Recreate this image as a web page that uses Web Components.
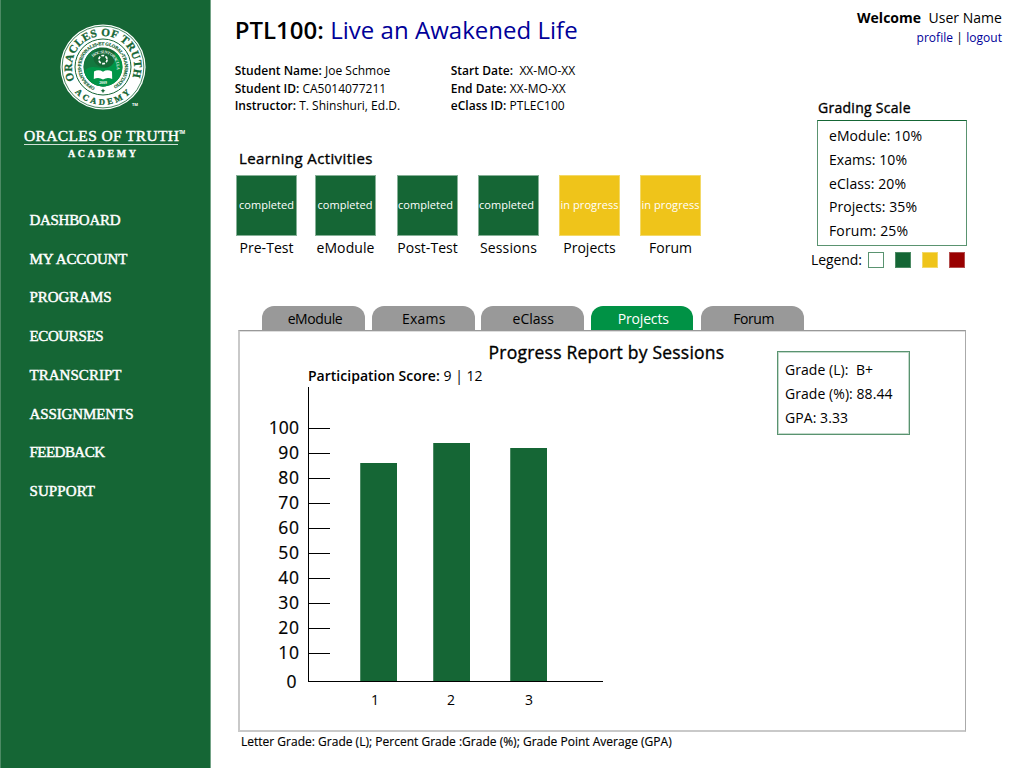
<!DOCTYPE html>
<html lang="en">
<head>
<meta charset="utf-8">
<title>Oracles of Truth Academy</title>
<style>
html,body{margin:0;height:100%;background:#fff}
body{font-family:"Open Sans","Noto Sans",sans-serif;color:#000;overflow:hidden}
</style>
</head>
<body>
<course-page></course-page>
<script>
const attach=(el,html)=>{el.attachShadow({mode:'open'}).innerHTML=html;};

/* One line of type, tracked so that it spans the width given in "w". */
class TextLine extends HTMLElement{
  constructor(){
    super();
    attach(this,`<style>
      :host{display:block;width:max-content;white-space:pre}
      :host([medium]){-webkit-text-stroke:.35px currentColor}
      ::slotted(b){font-weight:600}
      ::slotted(strong){font-weight:700}
      ::slotted(a){color:#000099;font-weight:inherit}
    </style><slot></slot>`);
  }
  connectedCallback(){
    const a=n=>this.getAttribute(n),s=this.style;
    if(a('size'))s.fontSize=a('size')+'px';
    if(a('lh'))s.lineHeight=a('lh')+'px';
    if(a('weight'))s.fontWeight=a('weight');
    if(a('w')){
      const n=this.textContent.length,d=+a('w')+1-this.getBoundingClientRect().width;
      const t=n>1?d/(n-1):0;
      s.letterSpacing=t+'px';s.marginRight=-t+'px';
    }
  }
}
customElements.define('text-line',TextLine);

class AcademySeal extends HTMLElement{
  constructor(){
    super();
    attach(this,`<style>:host{display:block;width:90px;height:90px}svg{display:block;overflow:visible}
      text{font-family:"Liberation Serif",serif;font-weight:700;fill:#156635}
      .o{stroke:#156635;stroke-width:.3px}</style>
    <svg width="90" height="90" viewBox="-45 -45 90 90">
      <defs>
        <path id="top" d="M-28.2 13.1A31.1 31.1 0 1 1 28.2 13.1"/>
        <path id="bot" d="M-33.5 17.5A37.8 37.8 0 0 0 33.5 17.5"/>
        <path id="ring" d="M-8 20.4A21.9 21.9 0 1 1 8 20.4"/>
        <path id="hoc" d="M-9.8 -9.8A13.9 13.9 0 0 1 13.4 3.5"/>
      </defs>
      <circle r="42.6" fill="#fff"/>
      <circle r="40.9" fill="none" stroke="#156635" stroke-width=".8"/>
      <circle r="28" fill="none" stroke="#156635" stroke-width="1"/>
      <text class="o" font-size="11.2"><textPath href="#top" textLength="121" lengthAdjust="spacing">ORACLES OF TRUTH</textPath></text>
      <text class="o" font-size="8.6"><textPath href="#bot" startOffset="9.5" textLength="62" lengthAdjust="spacing">ACADEMY</textPath></text>
      <text font-size="4.6" style="stroke:#156635;stroke-width:.2px"><textPath href="#ring" textLength="118" lengthAdjust="spacing">OPERANTIS•PERSONALIS•ET GLOBAL•TRANSMUTATIO</textPath></text>
      <path d="M0 21.4L.8 23L2.4 23.8L.8 24.6L0 26.2L-.8 24.6L-2.4 23.8L-.8 23Z" fill="#156635"/>
      <circle r="19.4" fill="#156635"/>
      <path d="M0 -19.4A19.4 19.4 0 0 0 0 19.4A9.7 9.7 0 0 0 0 0A9.7 9.7 0 0 1 0 -19.4Z" fill="#13783f"/>
      <path d="M-18.8 4.5C-14 -3 -5 1 0 1C9 1 14 -5 11.5 -15.6A19.4 19.4 0 1 1 -18.8 4.5Z" fill="#009548"/>
      <text font-size="4.2" style="fill:#e5f1e9"><textPath href="#hoc" textLength="35" lengthAdjust="spacing">HOC SUNT ORACULA</textPath></text>
      <circle cy="-7.4" r="4.1" fill="none" stroke="#fff" stroke-width="1.7" stroke-dasharray="2.9 1.39"/>
      <path d="M-9 4.6Q-4.5 2 0 4.8Q4.5 2 9 4.6L9.2 12Q4.5 9.6 0 12.5Q-4.5 9.6 -9.2 12Z" fill="#fff"/>
      <text y="17.2" font-size="3.8" text-anchor="middle" style="fill:#fff">2009</text>
      <text x="29" y="39" font-size="4" style="fill:#fff;font-family:'Open Sans',sans-serif">TM</text>
    </svg>`);
  }
}
customElements.define('academy-seal',AcademySeal);

class SideNav extends HTMLElement{
  constructor(){
    super();
    const items=[['DASHBOARD',90],['MY ACCOUNT',97],['PROGRAMS',81],['ECOURSES',73],['TRANSCRIPT',91],['ASSIGNMENTS',103],['FEEDBACK',74.5],['SUPPORT',64.5]];
    attach(this,`<style>
      :host{display:flex;flex-direction:column;box-sizing:border-box;width:211px;height:768px;background:#156635;color:#fff;
        font-family:"Liberation Serif",serif;padding-top:22px;border-left:1px solid #4c8a64;border-right:1px solid #73a386}
      academy-seal{margin-left:57px}
      .brand{display:flex;margin:15px 0 0 23px;-webkit-text-stroke:.45px #fff}
      .rule{width:154px;height:1px;background:#cfe0d6;margin:-1px 0 0 23px}
      .tm{font-family:"Open Sans",sans-serif;margin-top:2px;-webkit-text-stroke:.2px #fff}
      .sub{margin-left:67px;-webkit-text-stroke:.3px #fff}
      nav{margin:38px 0 0 28.5px;-webkit-text-stroke:.45px #fff}
    </style>
    <academy-seal></academy-seal>
    <div class="brand"><text-line size="15.5" lh="18" w="154">ORACLES OF TRUTH</text-line><text-line class="tm" size="4.5" lh="6" w="5">TM</text-line></div>
    <div class="rule"></div>
    <text-line class="sub" size="10" lh="18" weight="700" w="67">ACADEMY</text-line>
    <nav>${items.map(([t,w])=>`<text-line size="15" lh="38.7" w="${w}">${t}</text-line>`).join('')}</nav>`);
  }
}
customElements.define('side-nav',SideNav);

class ActivityTile extends HTMLElement{
  connectedCallback(){
    if(this.shadowRoot)return;
    const done=this.getAttribute('state')==='completed';
    attach(this,`<style>
      :host{display:flex;flex-direction:column;align-items:center;width:61px}
      .box{box-sizing:border-box;width:61px;height:61px;display:flex;justify-content:center;color:#fff;
        border:1px solid ${done?'#86b097':'#f3d968'};background:${done?'#156635':'#efc41a'};margin-bottom:2px}
      .box text-line{position:relative;left:${this.getAttribute('nudge')||0}px}
    </style>
    <div class="box"><text-line size="11" lh="57" w="${done?54:57}">${this.getAttribute('state')}</text-line></div>
    <text-line size="14" lh="20" w="${this.getAttribute('w')}">${this.getAttribute('name')}</text-line>`);
  }
}
customElements.define('activity-tile',ActivityTile);

class CourseHeader extends HTMLElement{
  constructor(){
    super();
    attach(this,`<style>
      :host{display:block;padding:14px 0 0 23.7px}
      .meta{display:grid;grid-template-columns:216px auto;margin-top:16.1px}
      .h{margin:33.4px 0 7px 4.3px}
      .tiles{display:flex;margin-left:1.3px}
    </style>
    <text-line size="24" lh="32" w="342"><b>PTL100:</b> <a>Live an Awakened Life</a></text-line>
    <div class="meta">
      <text-line size="12" lh="17.5" w="154.5"><b>Student Name:</b> Joe Schmoe</text-line><text-line size="12" lh="17.5" w="123.5"><b>Start Date:</b>  XX-MO-XX</text-line>
      <text-line size="12" lh="17.5" w="150.5"><b>Student ID:</b> CA5014077211</text-line><text-line size="12" lh="17.5" w="114"><b>End Date:</b> XX-MO-XX</text-line>
      <text-line size="12" lh="17.5" w="164.5"><b>Instructor:</b> T. Shinshuri, Ed.D.</text-line><text-line size="12" lh="17.5" w="113"><b>eClass ID:</b> PTLEC100</text-line>
    </div>
    <text-line class="h" size="15" lh="20" medium w="132.5">Learning Activities</text-line>
    <div class="tiles">
      <activity-tile state="completed" name="Pre-Test" w="53"></activity-tile>
      <activity-tile state="completed" name="eModule" w="57" nudge="-.5" style="margin-left:18px"></activity-tile>
      <activity-tile state="completed" name="Post-Test" w="59.5" nudge="-2" style="margin-left:21px"></activity-tile>
      <activity-tile state="completed" name="Sessions" w="56" nudge="-2" style="margin-left:20px"></activity-tile>
      <activity-tile state="in progress" name="Projects" w="51.5" style="margin-left:20px"></activity-tile>
      <activity-tile state="in progress" name="Forum" w="42" style="margin-left:20px"></activity-tile>
    </div>`);
  }
}
customElements.define('course-header',CourseHeader);

class UserPanel extends HTMLElement{
  constructor(){
    super();
    attach(this,`<style>
      :host{display:block;padding-top:8px}
      .user{display:flex;flex-direction:column;align-items:flex-end;padding-right:22px;gap:1px}
      .h{margin:51px 0 2px 18px}
      .scale{box-sizing:border-box;width:150px;height:126px;border:1px solid #5a9370;border-top-color:#156635;margin-left:17px;padding:3px 0 0 11px}
      .legend{display:flex;margin:4px 0 0 11px;align-items:center}
      i{box-sizing:border-box;width:16px;height:16px;margin-right:11px;border:1px solid}
      i:first-of-type{margin-left:6px}
    </style>
    <div class="user">
      <text-line size="14" lh="20" w="144"><strong>Welcome</strong>  User Name</text-line>
      <text-line size="12" lh="18" w="84.5"><a>profile</a> | <a>logout</a></text-line>
    </div>
    <text-line class="h" size="14" lh="20" medium w="91.5">Grading Scale</text-line>
    <div class="scale">
      <text-line size="14" lh="23.8" w="92">eModule: 10%</text-line>
      <text-line size="14" lh="23.8" w="77">Exams: 10%</text-line>
      <text-line size="14" lh="23.8" w="76">eClass: 20%</text-line>
      <text-line size="14" lh="23.8" w="87">Projects: 35%</text-line>
      <text-line size="14" lh="23.8" w="78">Forum: 25%</text-line>
    </div>
    <div class="legend"><text-line size="14" lh="20" w="50">Legend:</text-line>
      <i style="border-color:#5a9370"></i><i style="background:#156635;border-color:#4c8a64"></i><i style="background:#efc41a;border-color:#f3d968"></i><i style="background:#990000;border-color:#b34d4d"></i></div>`);
  }
}
customElements.define('user-panel',UserPanel);

class TabStrip extends HTMLElement{
  constructor(){
    super();
    const tabs=[['eModule',57,0,1.5],['Exams',42.5,7.5,0],['eClass',41.5,6.5,.6],['Projects',52.5,7,1.2],['Forum',42.5,8,1.2]];
    attach(this,`<style>
      :host{display:flex;padding-left:51.4px}
      div{width:102.5px;height:24px;display:flex;justify-content:center;background:#999;border-radius:12px 12px 0 0}
      .on{background:#009245;color:#fff}
      text-line{margin-top:-1px}
    </style>${tabs.map(([t,w,m,p])=>`<div class="${t==='Projects'?'on':''}" style="margin-left:${m}px"><text-line size="14" lh="27" w="${w}" style="padding-left:${p*2}px">${t}</text-line></div>`).join('')}`);
  }
}
customElements.define('tab-strip',TabStrip);

class BarChart extends HTMLElement{
  constructor(){
    super();
    const labels=[100,90,80,70,60,50,40,30,20,10];
    attach(this,`<style>
      :host{display:grid;grid-template-columns:60px 295px;grid-template-rows:295px auto}
      .y{display:flex;flex-direction:column;align-items:flex-end;padding:28px 9px 0 0;-webkit-text-stroke:.2px #000}
      .y text-line:last-child{margin:3.5px 2.5px 0 0}
      .plot{box-sizing:border-box;border-left:1px solid #000;border-bottom:1px solid #000;display:grid;height:295px}
      .plot>div{grid-area:1/1}
      .ticks{display:flex;flex-direction:column;gap:24px;padding-top:41px}
      .ticks span{width:21px;height:1px;background:#000}
      .bars{display:flex;align-items:flex-end}
      .bars span{background:#156635;border-left:1px solid #4c8a64;box-sizing:border-box;width:37px}
      .x{grid-column:2;display:flex;padding:8px 0 0 63px}
    </style>
    <div class="y">${labels.concat(0).map(n=>`<text-line size="17.5" lh="25" ${n?`w="${n===100?29.3:19.8}"`:''}>${n}</text-line>`).join('')}</div>
    <div class="plot">
      <div class="ticks">${labels.map(()=>'<span></span>').join('')}</div>
      <div class="bars"><span style="height:218px;margin-left:51px"></span><span style="height:238px;margin-left:36px"></span><span style="height:233px;margin-left:40px"></span></div>
    </div>
    <div class="x"><text-line size="14" lh="20">1</text-line><text-line size="14" lh="20" style="margin-left:68px">2</text-line><text-line size="14" lh="20" style="margin-left:70px">3</text-line></div>`);
  }
}
customElements.define('bar-chart',BarChart);

class ProgressReport extends HTMLElement{
  constructor(){
    super();
    attach(this,`<style>
      :host{display:block}
      .panel{box-sizing:border-box;width:728px;height:402px;margin-left:27px;border:2px solid #c9c9c9;border-top:1px solid #999;
        border-right:1px solid #aaa;box-shadow:inset 0 1px #ddd;display:grid;grid-template-columns:537px auto;align-items:start}
      .title{margin:8px 0 0 248.6px}
      .score{margin:1px 0 0 68px}
      bar-chart{margin:1px 0 0 8px}
      .grade{box-sizing:border-box;width:133px;height:84px;border:1px solid #5a9370;box-shadow:inset 0 0 0 1px #c3dacb;margin-top:20px;padding:6px 0 0 7px}
      .note{margin:1px 0 0 30px}
    </style>
    <tab-strip></tab-strip>
    <div class="panel">
      <div>
        <text-line class="title" size="17.5" lh="26" medium w="234.5">Progress Report by Sessions</text-line>
        <text-line class="score" size="14" lh="20" w="173.5"><b>Participation Score:</b> 9 | 12</text-line>
        <bar-chart></bar-chart>
      </div>
      <div class="grade">
        <text-line size="14" lh="24" w="87">Grade (L):  B+</text-line>
        <text-line size="14" lh="24" w="106.5">Grade (%): 88.44</text-line>
        <text-line size="14" lh="24" w="62">GPA: 3.33</text-line>
      </div>
    </div>
    <text-line class="note" size="12" lh="18" style="-webkit-text-stroke:.15px" w="429.7">Letter Grade: Grade (L); Percent Grade :Grade (%); Grade Point Average (GPA)</text-line>`);
  }
}
customElements.define('progress-report',ProgressReport);

class CoursePage extends HTMLElement{
  constructor(){
    super();
    attach(this,`<style>
      :host{display:grid;grid-template-columns:211px 813px;height:768px;width:1024px}
      main{display:grid;grid-template-columns:589px 224px;grid-template-rows:306px auto}
      progress-report{grid-column:1/3}
    </style>
    <side-nav></side-nav>
    <main><course-header></course-header><user-panel></user-panel><progress-report></progress-report></main>`);
  }
}
customElements.define('course-page',CoursePage);
</script>
</body>
</html>
